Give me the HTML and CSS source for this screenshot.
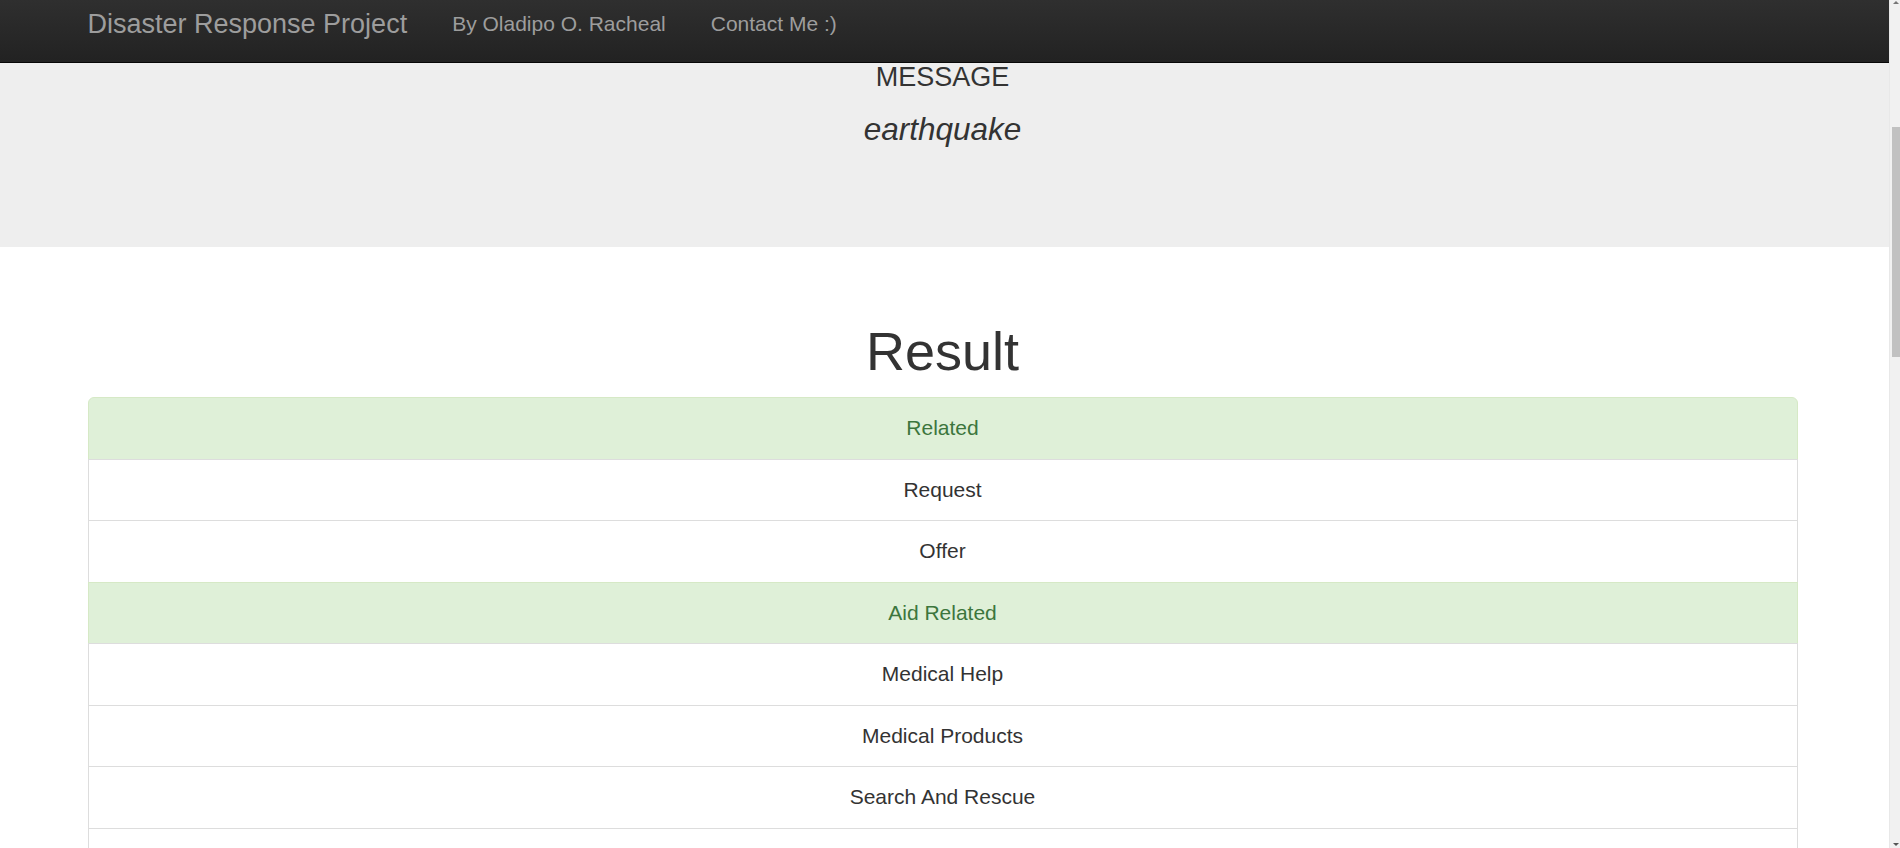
FILE: index.html
```html
<!DOCTYPE html>
<html lang="en">
<head>
<meta charset="utf-8">
<title>Disaster Response Project</title>
<link rel="stylesheet" href="styles.css">
</head>
<body>
<div class="viewport">
  <nav class="navbar">
    <div class="container nav-inner">
      <a class="brand" href="#">Disaster Response Project</a>
      <ul class="nav-links">
        <li><a href="#">By Oladipo O. Racheal</a></li>
        <li><a href="#">Contact Me :)</a></li>
      </ul>
    </div>
  </nav>
  <section class="jumbotron">
    <div class="container jumbo-inner">
      <h3 class="msg-label">MESSAGE</h3>
      <p class="msg-text">earthquake</p>
    </div>
  </section>
  <main class="container">
    <h1 class="result-title">Result</h1>
    <ul class="list-group">
      <li class="item success">Related</li>
      <li class="item">Request</li>
      <li class="item">Offer</li>
      <li class="item success">Aid Related</li>
      <li class="item">Medical Help</li>
      <li class="item">Medical Products</li>
      <li class="item">Search And Rescue</li>
      <li class="item item-empty"></li>
    </ul>
  </main>
</div>
<div class="scrollbar" aria-hidden="true">
  <div class="arrow arrow-up"></div>
  <div class="track"><div class="thumb"></div></div>
  <div class="arrow arrow-down"></div>
</div>
</body>
</html>
```

FILE: styles.css
```css
* { box-sizing: border-box; }

html, body {
  margin: 0;
  padding: 0;
}

body {
  display: flex;
  height: 100vh;
  overflow: hidden;
  font-family: "Liberation Sans", Arial, Helvetica, sans-serif;
  font-size: 21px;
  line-height: 30px;
  color: #333;
  background: #fff;
}

.viewport {
  flex: 1;
  min-width: 0;
  overflow: hidden;
}

.container {
  max-width: 1755px;
  margin: 0 auto;
  padding: 0 24.5px 0 20.5px;
}

/* Navbar */
.navbar {
  height: 63px;
  background-image: linear-gradient(to bottom, #2f2f2f 0%, #222 100%);
  border-bottom: 1px solid #080808;
}

.nav-inner {
  display: flex;
  align-items: flex-start;
  padding-top: 9px;
}

.brand {
  font-size: 27px;
  line-height: 30px;
  color: #9d9d9d;
  text-decoration: none;
  padding-right: 22.5px;
}

.nav-links {
  display: flex;
  list-style: none;
  margin: 0;
  padding: 0;
}

.nav-links a {
  display: block;
  padding: 0 22.5px;
  font-size: 21px;
  line-height: 30px;
  color: #9d9d9d;
  text-decoration: none;
}

/* Jumbotron */
.jumbotron {
  background: #eee;
  height: 184px;
}

.jumbo-inner {
  text-align: center;
}

.msg-label {
  margin: 0;
  font-size: 27px;
  line-height: 28px;
  font-weight: 400;
}

.msg-text {
  margin: 21px 0 0;
  font-size: 31.5px;
  line-height: 35px;
  font-style: italic;
}

/* Result */
.result-title {
  margin: 74px 0 16px;
  text-align: center;
  font-size: 54px;
  line-height: 60px;
  font-weight: 500;
}

.list-group {
  list-style: none;
  margin: 0 0 30px;
  padding: 0;
}

.item {
  text-align: center;
  padding: 15.25px 22.5px;
  line-height: 30px;
  min-height: 62px;
  background: #fff;
  border: 1px solid #ddd;
  margin-bottom: -1px;
}

.item:first-child {
  border-top-left-radius: 6px;
  border-top-right-radius: 6px;
}

.item.success {
  background: #dff0d8;
  color: #3c763d;
  border-color: #d6e9c6;
}

/* Scrollbar */
.scrollbar {
  flex: 0 0 11px;
  display: flex;
  flex-direction: column;
  background: #f1f1f1;
  border-left: 1px solid #e8e8e8;
}

.arrow {
  flex: 0 0 8px;
  display: flex;
  justify-content: flex-end;
  padding-right: 1px;
}

.arrow::before {
  content: "";
  width: 0;
  height: 0;
  border-left: 3px solid transparent;
  border-right: 3px solid transparent;
}

.arrow-up { align-items: flex-start; padding-top: 1px; }
.arrow-up::before { border-bottom: 3px solid #777; }

.arrow-down { align-items: flex-end; padding-bottom: 2px; }
.arrow-down::before { border-top: 3px solid #555; }

.track {
  flex: 1;
  padding: 119px 0 0 2px;
}

.thumb {
  height: 230px;
  background: #c1c1c1;
}
```
